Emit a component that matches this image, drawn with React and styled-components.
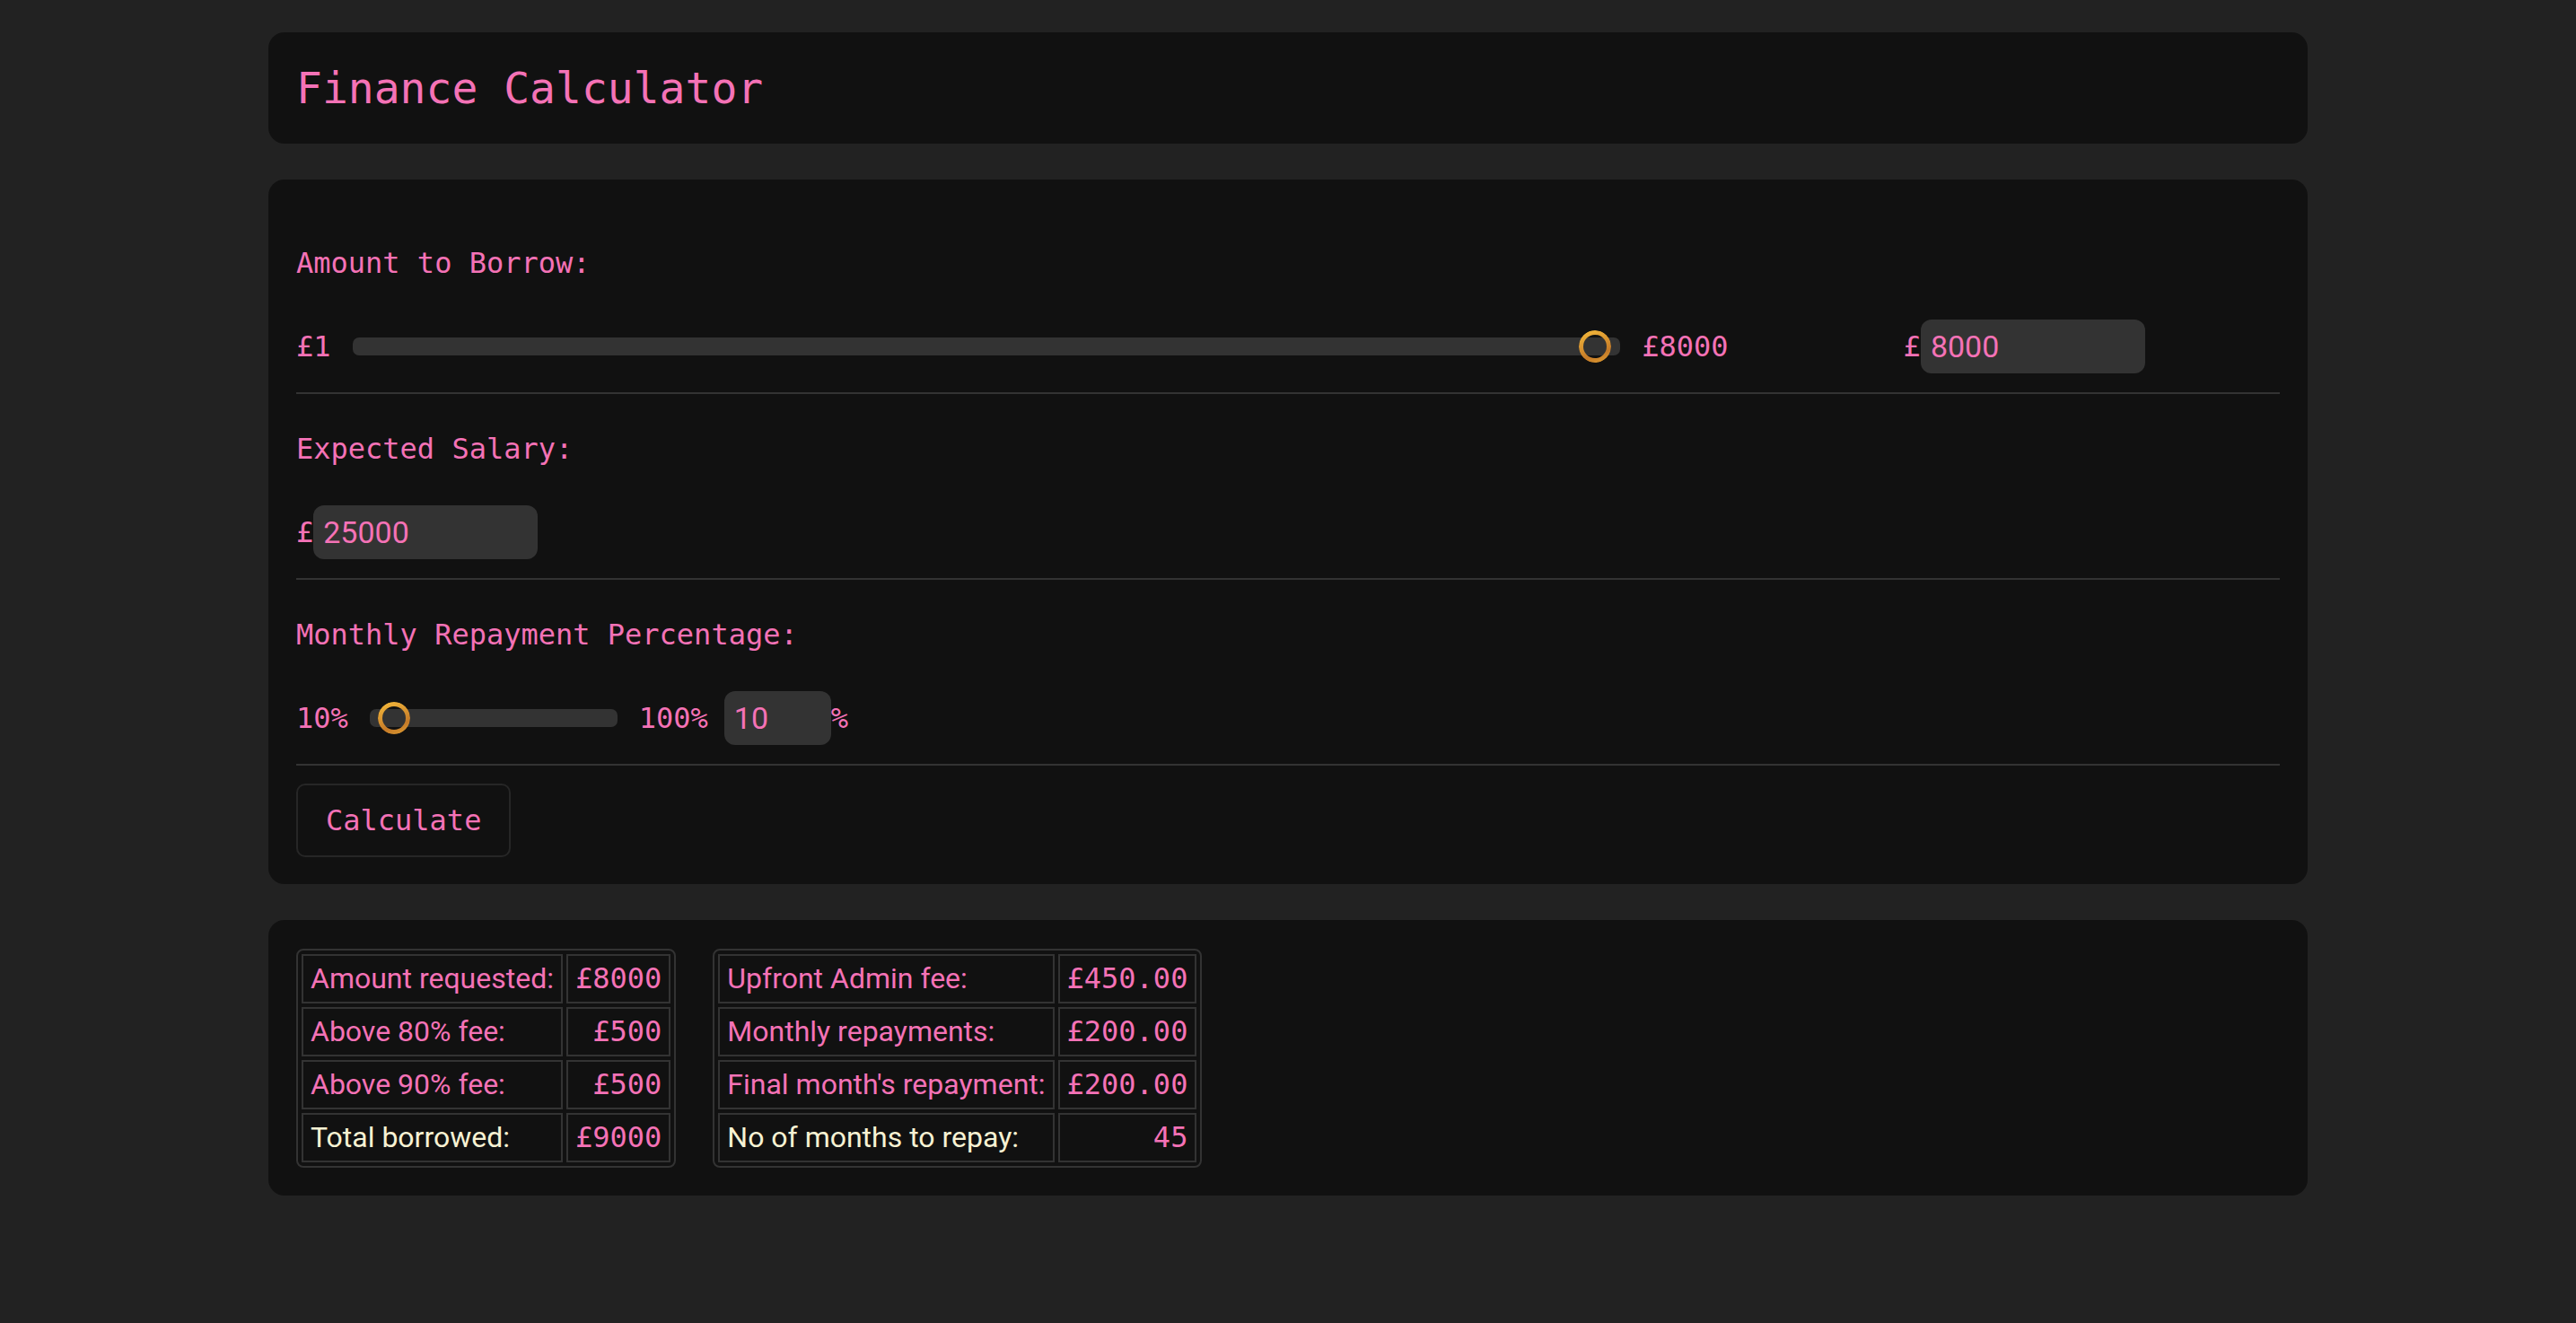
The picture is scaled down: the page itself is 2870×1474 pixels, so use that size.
import styled, { createGlobalStyle } from "styled-components"

const pink = "#f472b6"
const cream = "#f7f2d3"
const mono = `"DejaVu Sans Mono", "Liberation Mono", monospace`
const sans = `Roboto, "Liberation Sans", sans-serif`

const GlobalStyle = createGlobalStyle`
body {
    margin: 0;
    background: #222;
    font-family: ${mono};
    color: ${pink};
}
`

const leftTable = [
    { label: "Amount requested:", value: "£8000" },
    { label: "Above 80% fee:", value: "£500" },
    { label: "Above 90% fee:", value: "£500" },
    { label: "Total borrowed:", value: "£9000", total: true },
]

const rightTable = [
    { label: "Upfront Admin fee:", value: "£450.00" },
    { label: "Monthly repayments:", value: "£200.00" },
    { label: "Final month's repayment:", value: "£200.00" },
    { label: "No of months to repay:", value: "45", total: true },
]

function Slider({ min, max, value, width }){
    const pct = (value - min) / (max - min)
    return(
        <Track $width={width}>
            <Thumb style={{ left: `calc(9px + ${pct} * (100% - 55px))` }} />
        </Track>
    )
}

function ResultTable({ rows }){
    return(
        <Table>
            <tbody>
                {rows.map((row) =>(
                    <tr key={row.label}>
                        <LabelCell $total={row.total}>{row.label}</LabelCell>
                        <ValueCell>{row.value}</ValueCell>
                    </tr>
                ))}
            </tbody>
        </Table>
    )
}

function App(){
    return(
        <>
            <GlobalStyle />
            <Page>
                <Panel>
                    <Title>Finance Calculator</Title>
                </Panel>

                <FormPanel>
                    <Section>
                        <FieldLabel>Amount to Borrow:</FieldLabel>
                        <Row>
                            <SliderGroup $wide>
                                <Mark>£1</Mark>
                                <Slider min={1} max={8000} value={8000} />
                                <Mark>£8000</Mark>
                            </SliderGroup>
                            <InputGroup $offset={195}>
                                <Mark>£</Mark>
                                <NumberInput defaultValue="8000" />
                            </InputGroup>
                        </Row>
                    </Section>

                    <Section>
                        <FieldLabel>Expected Salary:</FieldLabel>
                        <Row>
                            <InputGroup>
                                <Mark>£</Mark>
                                <NumberInput defaultValue="25000" />
                            </InputGroup>
                        </Row>
                    </Section>

                    <Section>
                        <FieldLabel>Monthly Repayment Percentage:</FieldLabel>
                        <Row>
                            <SliderGroup>
                                <Mark>10%</Mark>
                                <Slider min={10} max={100} value={10} width={276} />
                                <Mark>100%</Mark>
                            </SliderGroup>
                            <InputGroup $offset={18}>
                                <NumberInput $small defaultValue="10" />
                                <Mark>%</Mark>
                            </InputGroup>
                        </Row>
                    </Section>

                    <CalcButton>Calculate</CalcButton>
                </FormPanel>

                <ResultsPanel>
                    <ResultTable rows={leftTable} />
                    <ResultTable rows={rightTable} />
                </ResultsPanel>
            </Page>
        </>
    )
}

export default App


const Page = styled.main`
max-width: 2272px;
margin: 0 auto;
padding: 36px 0 140px;
display: flex;
flex-direction: column;
gap: 40px;
`
const Panel = styled.div`
background: #111;
border-radius: 18px;
padding: 38px 31px;
`
const Title = styled.h1`
margin: 0;
font-family: ${mono};
font-weight: 400;
font-size: 48px;
line-height: 48px;
color: ${pink};
`
const FormPanel = styled(Panel)`
padding: 32px 31px 30px;
`
const Section = styled.section`
padding: 42px 0 21px;
border-bottom: 2px solid #333;
`
const FieldLabel = styled.div`
font-size: 32px;
line-height: 38px;
margin-bottom: 44px;
`
const Row = styled.div`
display: flex;
align-items: center;
height: 60px;
`
const SliderGroup = styled.div`
display: flex;
align-items: center;
gap: 24px;
width: ${(p) => (p.$wide ? "72.2%" : "auto")};
`
const Mark = styled.span`
font-family: ${mono};
font-size: 32px;
line-height: 38px;
white-space: nowrap;
`
const Track = styled.div`
position: relative;
height: 20px;
border-radius: 7px;
background: #333;
flex: ${(p) => (p.$width ? `0 0 ${p.$width}px` : "1")};
`
const Thumb = styled.div`
position: absolute;
top: -8px;
width: 36px;
height: 36px;
box-sizing: border-box;
border-radius: 50%;
padding: 5px;
background: linear-gradient(160deg, #f7bd3c, #c57a28 70%, #e0a032);
-webkit-mask: linear-gradient(#000 0 0) content-box exclude, linear-gradient(#000 0 0);
mask: linear-gradient(#000 0 0) content-box exclude, linear-gradient(#000 0 0);
`
const InputGroup = styled.div`
display: flex;
align-items: center;
margin-left: ${(p) => p.$offset || 0}px;
`
const NumberInput = styled.input`
width: ${(p) => (p.$small ? "119px" : "250px")};
height: 60px;
box-sizing: border-box;
border: none;
border-radius: 12px;
background: #333;
color: ${pink};
font-family: ${sans};
font-size: 34px;
padding: 0 11px;
outline: none;
`
const CalcButton = styled.button`
margin-top: 20px;
padding: 20px 31px;
background: transparent;
border: 2px solid #262626;
border-radius: 10px;
color: ${pink};
font-family: ${mono};
font-size: 32px;
line-height: 38px;
cursor: pointer;
`
const ResultsPanel = styled(Panel)`
padding: 32px 31px 31px;
display: flex;
align-items: flex-start;
gap: 41px;
`
const Table = styled.table`
border-collapse: separate;
border-spacing: 4px;
border: 2px solid #333;
border-radius: 8px;
`
const LabelCell = styled.td`
border: 2px solid #333;
padding: 2px 8px;
line-height: 47px;
font-family: ${sans};
font-size: 32px;
color: ${(p) => (p.$total ? cream : pink)};
white-space: nowrap;
`
const ValueCell = styled.td`
border: 2px solid #333;
padding: 2px 8px;
line-height: 47px;
font-family: ${mono};
font-size: 32px;
color: ${pink};
text-align: right;
white-space: nowrap;
`
